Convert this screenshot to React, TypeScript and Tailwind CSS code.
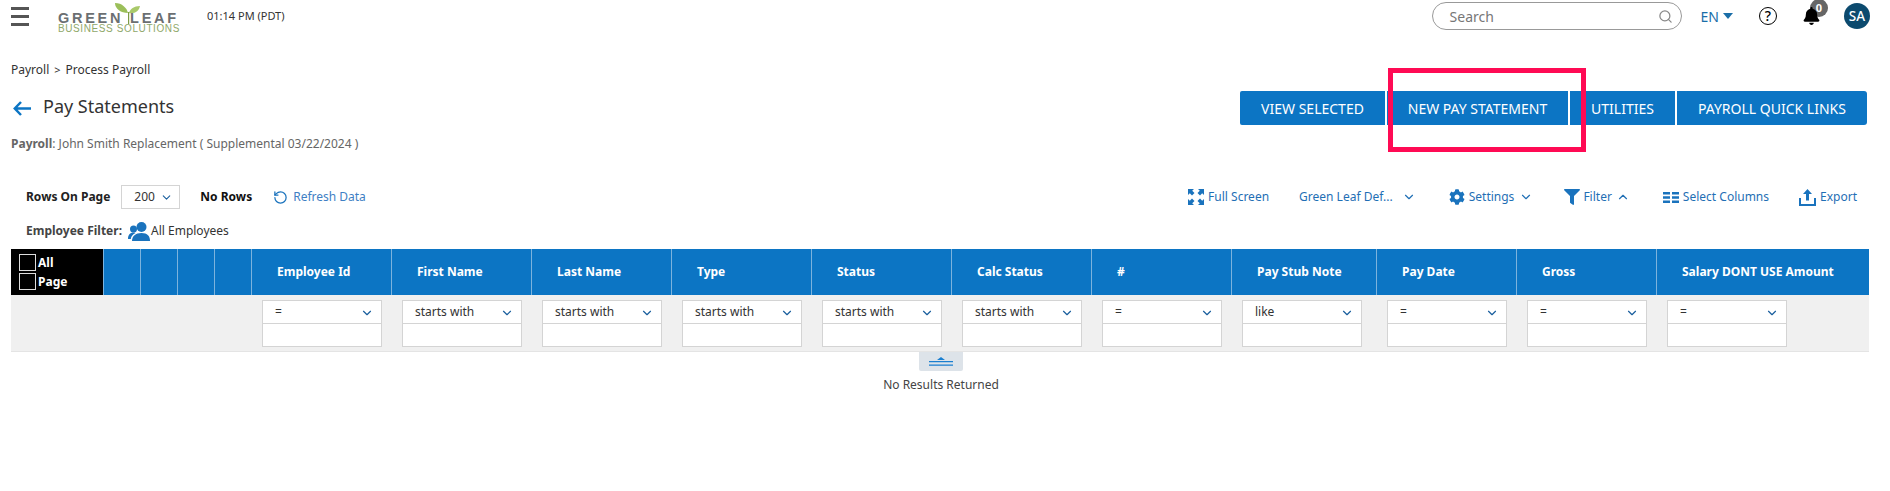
import { ChevronDown, ChevronUp, RotateCcw, Search } from "lucide-react";
import { FaBell, FaCog, FaFilter } from "react-icons/fa";

const columns = [
    { label: "Employee Id", op: "=", width: "w-[140px]" },
    { label: "First Name", op: "starts with", width: "w-[140px]" },
    { label: "Last Name", op: "starts with", width: "w-[140px]" },
    { label: "Type", op: "starts with", width: "w-[140px]" },
    { label: "Status", op: "starts with", width: "w-[140px]" },
    { label: "Calc Status", op: "starts with", width: "w-[140px]" },
    { label: "#", op: "=", width: "w-[140px]" },
    { label: "Pay Stub Note", op: "like", width: "w-[145px]" },
    { label: "Pay Date", op: "=", width: "w-[140px]" },
    { label: "Gross", op: "=", width: "w-[140px]" },
    { label: "Salary DONT USE Amount", op: "=", width: "flex-1" },
];

function Logo() {
    return (
        <div className="relative ml-[29px] h-[34px] w-[122px] shrink-0">
            <svg className="absolute left-[57px] top-[4px]" width="26" height="21" viewBox="0 0 26 21">
                <path d="M13 10C12 5 7 0 0 0c0 6 6 10 13 10z" fill="#9bbf5a" />
                <path d="M14 10c1-4 5-7 11-7-1 5-5 8-11 7z" fill="#a9c96a" />
                <path d="M13 9h1.200v12H13z" fill="#7d9c45" />
            </svg>
            <div className="absolute left-0 top-[13px] whitespace-nowrap text-[14.500px] font-bold leading-[12px] tracking-[2.700px] text-[#6b6f72] font-['Liberation_Sans',sans-serif]">GREEN<span className="ml-[7px]">LEAF</span></div>
            <div className="absolute left-0 top-[25px] whitespace-nowrap text-[10px] leading-[9px] tracking-[0.600px] text-[#8fa86a] font-['Liberation_Sans',sans-serif]">BUSINESS SOLUTIONS</div>
        </div>
    );
}

function ActionButton({ label, className }: { label: string; className: string }) {
    return (
        <div className={`flex h-[34px] items-center justify-center bg-[#0c75c4] text-[14px] text-white ${className}`}>
            {label}
        </div>
    );
}

function FullScreenIcon() {
    return (
        <svg width="16" height="16" viewBox="0 0 16 16" fill="#1a73bd">
            <path d="M0 0h6L4.200 1.800 6.500 4 4 6.500 1.800 4.200 0 6zM16 0v6l-1.800-1.800L12 6.500 9.500 4l2.300-2.200L10 0zM0 16v-6l1.800 1.800L4 9.500 6.500 12l-2.300 2.200L6 16zM16 16h-6l1.800-1.800L9.500 12 12 9.500l2.200 2.300L16 10z" />
        </svg>
    );
}

function ColumnsIcon() {
    return (
        <svg width="16" height="11" viewBox="0 0 16 11" fill="#1a73bd">
            <path d="M0 0h7v2.500H0zM9 0h7v2.500H9zM0 4.250h7v2.500H0zM9 4.250h7v2.500H9zM0 8.500h7V11H0zM9 8.500h7V11H9z" />
        </svg>
    );
}

function ExportIcon() {
    return (
        <svg width="17" height="17" viewBox="0 0 17 17" fill="#1a73bd">
            <path d="M8.500 0l4.500 5h-3v6.500H7V5H4z" />
            <path d="M0 9h2v6h13V9h2v8H0z" />
        </svg>
    );
}

function UsersIcon() {
    return (
        <svg className="ml-[6px]" width="22" height="19" viewBox="0 0 22 19" fill="#1a73bd">
            <circle cx="13.500" cy="5" r="5" />
            <circle cx="5.500" cy="7" r="3.500" />
            <path d="M4 19c0-5 3.500-8 9.500-8s8.500 3 8.500 8z" />
            <path d="M0 17c0-4 2-6.500 5.500-6.500.8 0 1.500.1 2 .4C4.500 12.500 3 14.500 2.800 17z" />
        </svg>
    );
}

function BackArrow() {
    return (
        <svg width="18" height="15" viewBox="0 0 18 15" fill="none" stroke="#0c75c4" strokeWidth="2.500">
            <path d="M18 7.500H2M8 1 1.800 7.500 8 14" />
        </svg>
    );
}

function HelpIcon() {
    return (
        <div className="flex h-[18px] w-[18px] items-center justify-center rounded-full border-[1.500px] border-black text-[14px] font-medium leading-none text-black">?</div>
    );
}

function FilterCell({ op, width }: { op: string; width: string }) {
    return (
        <div className={`${width} pl-[10px]`}>
            <div className="w-[120px] border border-[#d4d4d4] bg-white">
                <div className="flex h-[23px] items-center justify-between border-b border-[#d4d4d4] pl-[12px] pr-[7px] text-[12px] text-[#333]">
                    <span>{op}</span>
                    <ChevronDown className="mt-[1px] h-[14px] w-[14px] text-[#1a5f9e]" strokeWidth={2} />
                </div>
                <div className="h-[22px]" />
            </div>
        </div>
    );
}

export default function App() {
    return (
        <div className="relative h-[491px] w-[1890px] overflow-hidden bg-white text-[#333] font-['Noto_Sans',sans-serif]">
            {/* Top bar */}
            <div className="flex h-[32px] items-center pl-[11px]">
                <div className="flex w-[18px] flex-col gap-[5px]">
                    <div className="h-[3px] bg-[#555]" />
                    <div className="h-[3px] bg-[#555]" />
                    <div className="h-[3px] bg-[#555]" />
                </div>
                <Logo />
                <div className="ml-[27px] text-[11px] text-[#333]">01:14 PM (PDT)</div>

                <div className="ml-auto flex h-[28px] w-[250px] items-center justify-between rounded-full border border-[#999] pl-[17px] pr-[8px] text-[14px] text-[#777]">
                    <span>Search</span>
                    <Search className="h-[15px] w-[15px] text-[#888]" />
                </div>
                <div className="ml-[19px] flex items-center text-[14px] text-[#1a6ea8]">
                    EN
                    <svg className="ml-[4px]" width="10" height="6" viewBox="0 0 10 6" fill="#1a6ea8">
                        <path d="M0 0h10L5 6z" />
                    </svg>
                </div>
                <div className="ml-[26px]">
                    <HelpIcon />
                </div>
                <div className="relative ml-[26px]">
                    <div className="absolute -right-[8px] -top-[8px] flex h-[18px] w-[18px] items-center justify-center rounded-full bg-[#666] text-[11px] font-bold text-white">0</div>
                    <FaBell className="relative h-[18px] w-[17px] text-black" />
                </div>
                <div className="ml-[24px] mr-[20px] flex h-[26px] w-[26px] items-center justify-center rounded-full bg-[#0c4a6e] text-[13.500px] font-medium text-white">SA</div>
            </div>

            {/* Breadcrumb */}
            <div className="mt-[28px] flex h-[20px] items-center pl-[11px] text-[12px] text-[#333]">
                Payroll <span className="mx-[5px] text-[11px]">&gt;</span> Process Payroll
            </div>

            {/* Title and actions */}
            <div className="mt-[11px] flex h-[34px] items-center pl-[13px] pr-[23px]">
                <BackArrow />
                <div className="ml-[12px] -mt-[3px] text-[18px] text-[#333]">Pay Statements</div>
                <div className="ml-auto flex gap-[2px]">
                    <ActionButton label="VIEW SELECTED" className="w-[145px] rounded-l-[2px]" />
                    <ActionButton label="NEW PAY STATEMENT" className="w-[181px]" />
                    <ActionButton label="UTILITIES" className="w-[105px]" />
                    <ActionButton label="PAYROLL QUICK LINKS" className="w-[190px] rounded-r-[3px]" />
                </div>
            </div>

            {/* Payroll name */}
            <div className="mt-[9px] h-[20px] pl-[11px] text-[12px] leading-[20px] text-[#666]">
                <span className="font-bold">Payroll</span>: John Smith Replacement ( Supplemental 03/22/2024 )
            </div>

            {/* Toolbar */}
            <div className="mt-[31px] flex h-[24px] items-center pl-[26px] pr-[33px] text-[12px]">
                <span className="font-bold text-[#222]">Rows On Page</span>
                <div className="ml-[11px] flex h-[24px] w-[59px] items-center border border-[#d4d4d4] pl-[12px] text-[#333]">
                    200
                    <ChevronDown className="ml-[5px] h-[13px] w-[13px] text-[#1a5f9e]" />
                </div>
                <span className="ml-[20px] font-bold text-[#111]">No Rows</span>
                <RotateCcw className="ml-[21px] h-[15px] w-[15px] text-[#1a73bd]" />
                <span className="ml-[5px] text-[#3f7fc4]">Refresh Data</span>

                <div className="ml-auto flex items-center text-[12px] text-[#1f6fb5]">
                    <FullScreenIcon />
                    <span className="ml-[4px]">Full Screen</span>
                    <span className="ml-[30px]">Green Leaf Def...</span>
                    <ChevronDown className="ml-[9px] h-[14px] w-[14px]" />
                    <FaCog className="ml-[33px] h-[16px] w-[16px] text-[#1a73bd]" />
                    <span className="ml-[4px]">Settings</span>
                    <ChevronDown className="ml-[5px] h-[14px] w-[14px]" />
                    <FaFilter className="ml-[31px] h-[16px] w-[16px] text-[#1a73bd]" />
                    <span className="ml-[3px]">Filter</span>
                    <ChevronUp className="ml-[4px] h-[14px] w-[14px]" />
                    <div className="ml-[33px]"><ColumnsIcon /></div>
                    <span className="ml-[4px]">Select Columns</span>
                    <div className="ml-[30px]"><ExportIcon /></div>
                    <span className="ml-[4px]">Export</span>
                </div>
            </div>

            {/* Employee filter */}
            <div className="mt-[12px] flex h-[20px] items-center pl-[26px] text-[12px]">
                <span className="font-bold text-[#444]">Employee Filter:</span>
                <UsersIcon />
                <span className="ml-[1px] text-[#333]">All Employees</span>
            </div>

            {/* Table */}
            <div className="mx-[11px] mt-[8px] w-[1858px]">
                <div className="flex h-[46px] bg-[#0c75c4] text-[12px] font-bold text-white">
                    <div className="flex w-[92px] flex-col justify-center gap-[2px] bg-black pl-[8px] text-[12px] leading-[17px]">
                        <div className="flex items-center gap-[2px]">
                            <div className="h-[17px] w-[17px] border-[1.500px] border-[#ddd]" />
                            All
                        </div>
                        <div className="flex items-center gap-[2px]">
                            <div className="h-[17px] w-[17px] border-[1.500px] border-[#ddd]" />
                            Page
                        </div>
                    </div>
                    <div className="w-[37px] border-l border-[#7db3dd]" />
                    <div className="w-[37px] border-l border-[#7db3dd]" />
                    <div className="w-[37px] border-l border-[#7db3dd]" />
                    <div className="w-[37px] border-l border-[#7db3dd]" />
                    {columns.map((col) => (
                        <div key={col.label} className={`flex items-center border-l border-[#7db3dd] pl-[25px] ${col.width}`}>
                            {col.label}
                        </div>
                    ))}
                </div>
                <div className="flex h-[57px] items-start border-b border-[#e4e4e4] bg-[#f0f0f0] pl-[241px] pt-[5px]">
                    {columns.map((col) => (
                        <FilterCell key={col.label} op={col.op} width={col.width} />
                    ))}
                </div>
                <div className="flex flex-col items-center pl-[2px]">
                    <div className="flex h-[19px] w-[44px] flex-col items-center justify-center rounded-b-[2px] bg-[#dde3e9]">
                        <svg width="24" height="10" viewBox="0 0 24 10" fill="#1a7fd0">
                            <path d="M12 0l4 3H8zM0 4h24v1.200H0zM0 7.500h24v1.200H0z" />
                        </svg>
                    </div>
                    <div className="mt-[5px] text-[12px] text-[#444]">No Results Returned</div>
                </div>
            </div>

            {/* Annotation box drawn over the page */}
            <div className="pointer-events-none absolute left-[1388px] top-[68px] h-[84px] w-[198px] border-[5px] border-[#ff0a54]" />
        </div>
    );
}
